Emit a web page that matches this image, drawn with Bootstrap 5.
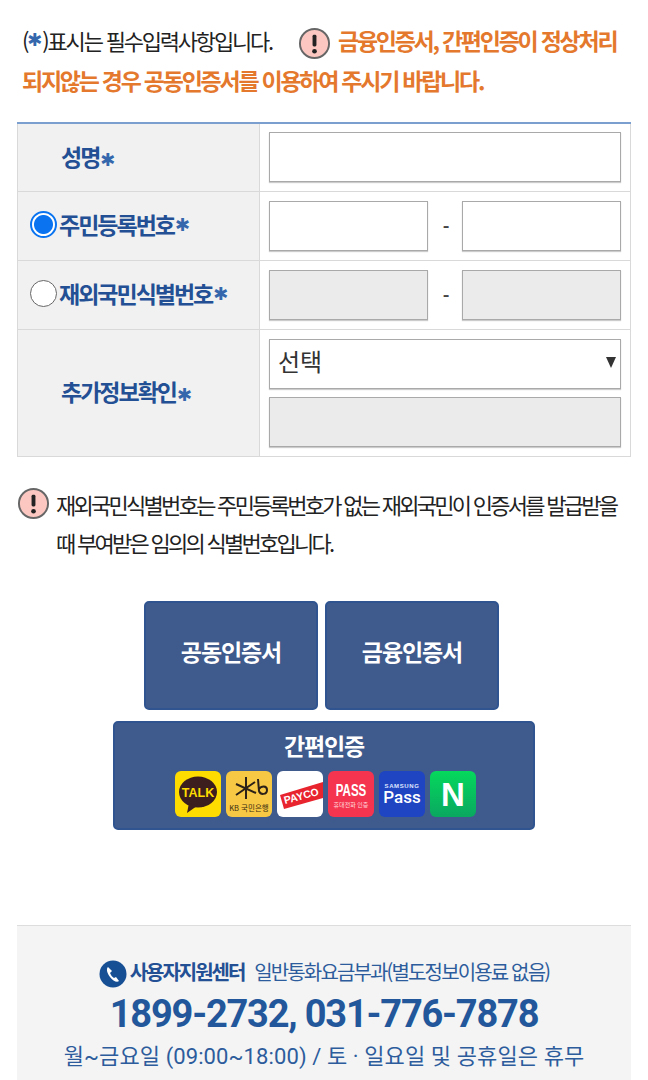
<!DOCTYPE html>
<html lang="ko">
<head>
<meta charset="utf-8">
<title>본인확인</title>
<link href="https://cdn.jsdelivr.net/npm/bootstrap@5.3.0/dist/css/bootstrap.min.css" rel="stylesheet">
<style>
  body { font-family: "Noto Sans CJK KR", "Noto Sans", sans-serif; color: #222; background: #fff; }
  .page-wrap { padding: 0 17px; height: 1080px; overflow: hidden; }
  .notice-top { padding: 20px 5px 0; height: 122px; font-size: 22px; line-height: 40px; letter-spacing: -2.2px; white-space: nowrap; }
  .notice-top .warn-txt { color: #e4782c; font-size: 23px; font-weight: 700; letter-spacing: -2.25px; }
  .star-mark { font-family: "DejaVu Sans", sans-serif; color: #3567ad; font-size: 18px; font-weight: 700; letter-spacing: 0; margin-left: 1px; }
  .paren-star { margin: 0; font-size: 18px; }
  .warn-ico { width: 33px; height: 33px; flex: none; }
  .notice-top .warn-ico { margin: 6px 7px 0 26px; }
  .auth-tbl { width: 614px; border-collapse: collapse; border-top: 2px solid #7ba0cf; table-layout: fixed; }
  .auth-tbl th, .auth-tbl td { border: 1px solid #d9d9d9; padding: 0; }
  .auth-tbl tr:first-child th, .auth-tbl tr:first-child td { border-top: 0; }
  .auth-tbl th { width: 242px; padding-bottom: 3px; background: #f1f1f1; color: #234f94; font-size: 23px; font-weight: 700; letter-spacing: -2px; white-space: nowrap; }
  .auth-tbl td { padding: 9px; height: 68px; }
  .auth-tbl tr:first-child td { padding-top: 8px; height: 67px; }
  .auth-tbl .form-control, .auth-tbl .form-select { height: 50px; border: 1px solid #a9a9a9; border-radius: 0; box-shadow: 0 1px 1px #ccc; }
  .auth-tbl .form-control:disabled { background: #ebebeb; }
  .auth-tbl .form-select { font-size: 24px; padding: 0 8px 6px; color: #333; background-image: none; }
  .sel-arrow { position: absolute; right: 5px; top: 18px; width: 0; height: 0; border-left: 5px solid transparent; border-right: 5px solid transparent; border-top: 11px solid #333; }
  .id-dash { width: 34px; padding-left: 2px; text-align: center; font-size: 18px; font-weight: 700; color: #444; flex: none; }
  .radio-mark { width: 27px; height: 27px; margin-right: 2px; border-radius: 50%; border: 1px solid #666; background: #fff; flex: none; }
  .radio-mark.on { border: 2px solid #0a74f0; background: radial-gradient(circle, #0a74f0 0 9px, #fff 10px); }
  .label-pad { padding-left: 12px; }
  .label-mid { padding-left: 43px !important; }
  .notice-mid { padding-top: 28px; height: 144px; }
  .notice-mid p { font-size: 22px; line-height: 38px; letter-spacing: -2.72px; padding-left: 39px; margin: 0; white-space: nowrap; }
  .notice-mid .warn-ico { position: absolute; left: 0; top: 2px; }
  .btn-auth { background: #3f5a8c; border: 2px solid #2f5490; border-radius: 5px; color: #fff; font-size: 23px; font-weight: 700; letter-spacing: -1.1px; }
  .btn-auth:hover { background: #3f5a8c; color: #fff; }
  .big-row { gap: 7px; margin: 0 5px 11px 0; }
  .btn-big { width: 174px; height: 109px; padding: 0 0 8px; }
  .btn-wide { width: 422px; height: 109px; padding: 8px 0 0; line-height: 28px; }
  .logo-row { gap: 5px; margin: 12px 0 0 2px; }
  .logo-ico { width: 46px; height: 46px; display: block; border-radius: 6px; }
  .help-box { position: absolute; left: 17px; right: 17px; top: 925px; height: 155px; background: #f4f4f4; border-top: 1px solid #ddd; text-align: center; color: #2d5c9c; }
  .help-line { font-size: 20px; letter-spacing: -1.85px; line-height: 30px; padding-top: 31px; white-space: nowrap; }
  .help-line b { color: #234f94; font-size: 20px; letter-spacing: -2px; margin-right: 6px; }
  .phone-no { font-family: "Roboto", "Liberation Sans", sans-serif; font-size: 38px; font-weight: 700; color: #22579b; line-height: 52px; letter-spacing: -1.2px; }
  .hours-line { font-family: "Roboto", "Noto Sans CJK KR", sans-serif; font-size: 22px; line-height: 34px; letter-spacing: .1px; white-space: nowrap; }
  .tel-ico { width: 28px; height: 28px; margin-right: -1px; vertical-align: -8px; }
</style>
</head>
<body>
<svg width="0" height="0" class="position-absolute">
  <symbol id="warnIco" viewBox="0 0 34 34">
    <circle cx="17" cy="17" r="15" fill="#fbc7c0" stroke="#666" stroke-width="2"/>
    <rect x="15" y="8" width="4" height="12" rx="1.5" fill="#222"/>
    <circle cx="17" cy="25" r="2.4" fill="#222"/>
  </symbol>
</svg>
<div class="page-wrap position-relative">
  <div class="notice-top">
    <div class="d-flex align-items-center">(<span class="star-mark paren-star">✱</span>)표시는 필수입력사항입니다.
      <svg class="warn-ico"><use href="#warnIco"/></svg>
      <span class="warn-txt">금융인증서, 간편인증이 정상처리</span>
    </div>
    <div class="warn-txt">되지않는 경우 공동인증서를 이용하여 주시기 바랍니다.</div>
  </div>

  <table class="auth-tbl">
    <tr>
      <th class="label-mid">성명<span class="star-mark">✱</span></th>
      <td><input type="text" class="form-control"></td>
    </tr>
    <tr>
      <th><div class="d-flex align-items-center label-pad"><span class="radio-mark on"></span>주민등록번호<span class="star-mark">✱</span></div></th>
      <td><div class="d-flex align-items-center"><input type="text" class="form-control"><span class="id-dash">-</span><input type="text" class="form-control"></div></td>
    </tr>
    <tr>
      <th><div class="d-flex align-items-center label-pad"><span class="radio-mark"></span>재외국민식별번호<span class="star-mark">✱</span></div></th>
      <td><div class="d-flex align-items-center"><input type="text" class="form-control" disabled><span class="id-dash">-</span><input type="text" class="form-control" disabled></div></td>
    </tr>
    <tr>
      <th class="label-mid">추가정보확인<span class="star-mark">✱</span></th>
      <td>
        <div class="position-relative mb-2">
          <select class="form-select"><option>선택</option></select>
          <span class="sel-arrow"></span>
        </div>
        <input type="text" class="form-control" disabled>
      </td>
    </tr>
  </table>

  <div class="notice-mid">
    <div class="position-relative">
      <svg class="warn-ico"><use href="#warnIco"/></svg>
      <p>재외국민식별번호는 주민등록번호가 없는 재외국민이 인증서를 발급받을</p>
      <p>때 부여받은 임의의 식별번호입니다.</p>
    </div>
  </div>

  <div class="d-flex justify-content-center big-row">
    <button type="button" class="btn btn-auth btn-big">공동인증서</button>
    <button type="button" class="btn btn-auth btn-big">금융인증서</button>
  </div>
  <div class="d-flex justify-content-center">
    <button type="button" class="btn btn-auth btn-wide d-flex flex-column align-items-center">
      간편인증
      <span class="d-flex justify-content-center logo-row">
        <svg class="logo-ico" viewBox="0 0 46 46"><rect width="46" height="46" fill="#ffdc00"/><ellipse cx="23" cy="21" rx="19" ry="15.5" fill="#3c1e1e"/><path d="M14 32l-2 10 10-7z" fill="#3c1e1e"/><text x="23" y="25.5" text-anchor="middle" font-family="Liberation Sans" font-weight="700" font-size="12.5" letter-spacing="0" fill="#ffdc00">TALK</text></svg>
        <svg class="logo-ico" viewBox="0 0 46 46"><rect width="46" height="46" fill="#f7c844"/><path d="M20 6v22M10 13l20 9M29 11l-19 13M32 8l1 12c1 4 8 4 8-1s-6-4-8-1" fill="none" stroke="#2b2118" stroke-width="2"/><text x="23" y="40" text-anchor="middle" font-family="Noto Sans CJK KR" font-weight="400" font-size="7.5" letter-spacing="0" fill="#3a2c10">KB 국민은행</text></svg>
        <svg class="logo-ico" viewBox="0 0 46 46"><rect width="46" height="46" fill="#fff"/><path d="M3 24L46 11v16L7 38z" fill="#e8242e"/><text x="8" y="33" font-family="Liberation Sans" font-weight="700" font-size="10.5" letter-spacing="0" fill="#fff" transform="rotate(-15 8 33)">PAYCO</text></svg>
        <svg class="logo-ico" viewBox="0 0 46 46"><rect width="46" height="46" fill="#f5354f"/><text transform="translate(23 25) scale(.68 1)" text-anchor="middle" font-family="Liberation Sans" font-weight="700" font-size="17" letter-spacing="0" fill="#fff">PASS</text><text x="23" y="36" text-anchor="middle" font-family="Noto Sans CJK KR" font-weight="400" font-size="6" letter-spacing="0" fill="#ffd5da">휴대전화 인증</text></svg>
        <svg class="logo-ico" viewBox="0 0 46 46"><rect width="46" height="46" fill="#1f45c2"/><text x="23" y="17" text-anchor="middle" font-family="Liberation Sans" font-weight="700" font-size="6" letter-spacing=".6" fill="#dfe6ff">SAMSUNG</text><text x="23" y="32" text-anchor="middle" font-family="Roboto" font-size="17" font-weight="500" letter-spacing="0" fill="#fff">Pass</text></svg>
        <svg class="logo-ico" viewBox="0 0 46 46"><defs><linearGradient id="nGrad" x1="0" y1="0" x2="0" y2="1"><stop offset="0" stop-color="#05d85c"/><stop offset="1" stop-color="#0aa860"/></linearGradient></defs><rect width="46" height="46" fill="url(#nGrad)"/><text x="23" y="35" text-anchor="middle" font-family="Liberation Sans" font-weight="700" font-size="33" letter-spacing="0" fill="#fff">N</text></svg>
      </span>
    </button>
  </div>

  <div class="help-box">
    <div class="help-line">
      <svg class="tel-ico" viewBox="0 0 28 28"><circle cx="14" cy="14" r="13.5" fill="#174f94"/><path d="M9 7c-2 2-1 6 2 10s7 6 9 4l-3-4-2 1c-2-1-3-3-4-5l2-2z" fill="#fff"/></svg>
      <b>사용자지원센터</b> 일반통화요금부과(별도정보이용료 없음)
    </div>
    <div class="phone-no">1899-2732, 031-776-7878</div>
    <div class="hours-line">월~금요일 (09:00~18:00) / 토 · 일요일 및 공휴일은 휴무</div>
  </div>
</div>
<script src="https://cdn.jsdelivr.net/npm/bootstrap@5.3.0/dist/js/bootstrap.bundle.min.js"></script>
</body>
</html>
